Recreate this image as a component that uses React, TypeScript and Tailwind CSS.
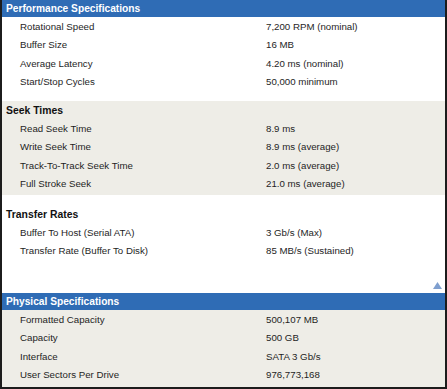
import React from 'react';

type Row = [string, string];

const performance: Row[] = [
  ['Rotational Speed', '7,200 RPM (nominal)'],
  ['Buffer Size', '16 MB'],
  ['Average Latency', '4.20 ms (nominal)'],
  ['Start/Stop Cycles', '50,000 minimum'],
];

const seekTimes: Row[] = [
  ['Read Seek Time', '8.9 ms'],
  ['Write Seek Time', '8.9 ms (average)'],
  ['Track-To-Track Seek Time', '2.0 ms (average)'],
  ['Full Stroke Seek', '21.0 ms (average)'],
];

const transferRates: Row[] = [
  ['Buffer To Host (Serial ATA)', '3 Gb/s (Max)'],
  ['Transfer Rate (Buffer To Disk)', '85 MB/s (Sustained)'],
];

const physical: Row[] = [
  ['Formatted Capacity', '500,107 MB'],
  ['Capacity', '500 GB'],
  ['Interface', 'SATA 3 Gb/s'],
  ['User Sectors Per Drive', '976,773,168'],
];

function SpecRows({ rows }: { rows: Row[] }) {
  return (
    <div>
      {rows.map(([label, value]) => (
        <div key={label} className="flex h-[18.5px] items-center">
          <div className="w-[264px] pl-[18px]">{label}</div>
          <div>{value}</div>
        </div>
      ))}
    </div>
  );
}

function BlueHeader({ title }: { title: string }) {
  return (
    <div className="flex h-[17px] items-center bg-[#2f6cb5] pl-[4px] text-[10.2px] font-bold text-white">
      {title}
    </div>
  );
}

function SubHeader({ title }: { title: string }) {
  return <div className="flex h-[19px] items-center pl-[4px] text-[10.4px] font-bold text-[#111]">{title}</div>;
}

export default function App() {
  return (
    <div
      className="h-[389px] w-[447px] overflow-hidden border-x-2 border-b-2 border-[#1c1c1c] bg-white text-[9.7px] text-[#1e1e1e]"
      style={{ fontFamily: '"Liberation Sans", Arial, sans-serif' }}
    >
      <BlueHeader title="Performance Specifications" />
      <div className="pt-[1px]">
        <SpecRows rows={performance} />
      </div>
      <div className="mt-[9px] bg-[#eeede7] pb-[1px]">
        <SubHeader title="Seek Times" />
        <SpecRows rows={seekTimes} />
      </div>
      <div className="pt-[10px]">
        <SubHeader title="Transfer Rates" />
        <SpecRows rows={transferRates} />
        <div className="flex h-[32px] items-end justify-end pb-[4px] pr-[3px]">
          <svg width="9" height="7" viewBox="0 0 9 7">
            <polygon points="4.5,0 9,7 0,7" fill="#7f9fcf" />
          </svg>
        </div>
      </div>
      <BlueHeader title="Physical Specifications" />
      <div className="bg-[#eeede7] pt-[1px] pb-[4px]">
        <SpecRows rows={physical} />
      </div>
    </div>
  );
}
